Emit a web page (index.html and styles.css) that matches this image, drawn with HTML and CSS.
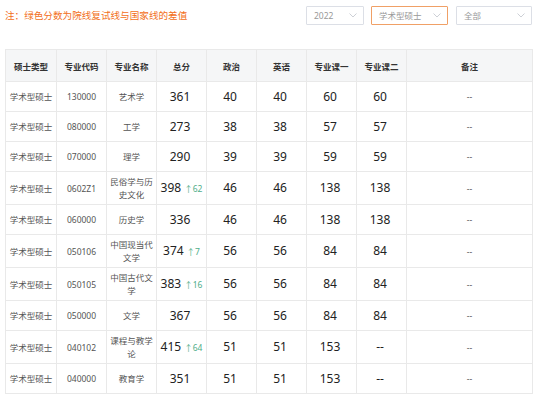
FILE: index.html
```html
<!DOCTYPE html>
<html lang="zh-CN">
<head>
    <meta charset="UTF-8">
    <meta name="viewport" content="width=device-width, initial-scale=1.0">
    <title>复试分数线</title>
    <link rel="stylesheet" href="styles.css">
</head>
<body>
    <div class="page">
        <!-- 顶部：说明 + 筛选 -->
        <div class="toolbar">
            <p class="note">注：绿色分数为院线复试线与国家线的差值</p>
            <div class="filters">
                <div class="select year">
                    <span>2022</span>
                    <svg class="arrow" width="8" height="5" viewBox="0 0 8 5"><path d="M0.5 0.5 L4 4 L7.5 0.5" fill="none" stroke="#c0c4cc" stroke-width="0.8"/></svg>
                </div>
                <div class="select type active">
                    <span>学术型硕士</span>
                    <svg class="arrow" width="8" height="5" viewBox="0 0 8 5"><path d="M0.5 0.5 L4 4 L7.5 0.5" fill="none" stroke="#c0c4cc" stroke-width="0.8"/></svg>
                </div>
                <div class="select all">
                    <span>全部</span>
                    <svg class="arrow" width="8" height="5" viewBox="0 0 8 5"><path d="M0.5 0.5 L4 4 L7.5 0.5" fill="none" stroke="#c0c4cc" stroke-width="0.8"/></svg>
                </div>
            </div>
        </div>

        <!-- 分数线列表 -->
        <table class="table">
            <colgroup>
                <col class="c-type">
                <col span="7" class="c-std">
                <col class="c-remark">
            </colgroup>
            <thead>
                <tr>
                    <th>硕士类型</th>
                    <th>专业代码</th>
                    <th>专业名称</th>
                    <th>总分</th>
                    <th>政治</th>
                    <th>英语</th>
                    <th>专业课一</th>
                    <th>专业课二</th>
                    <th>备注</th>
                </tr>
            </thead>
            <tbody id="scoreTable"></tbody>
        </table>
    </div>

    <script>
        const rows = [
            ['130000', '艺术学', 361, '', 40, 40, 60, 60],
            ['080000', '工学', 273, '', 38, 38, 57, 57],
            ['070000', '理学', 290, '', 39, 39, 59, 59],
            ['0602Z1', '民俗学与历史文化', 398, 62, 46, 46, 138, 138],
            ['060000', '历史学', 336, '', 46, 46, 138, 138],
            ['050106', '中国现当代文学', 374, 7, 56, 56, 84, 84],
            ['050105', '中国古代文学', 383, 16, 56, 56, 84, 84],
            ['050000', '文学', 367, '', 56, 56, 84, 84],
            ['040102', '课程与教学论', 415, 64, 51, 51, 153, '--'],
            ['040000', '教育学', 351, '', 51, 51, 153, '--']
        ];

        const scoreTable = document.getElementById('scoreTable');

        rows.forEach(r => {
            const [code, name, total, diff, politics, english, course1, course2] = r;
            const tr = document.createElement('tr');
            tr.innerHTML = `
                <td class="text">学术型硕士</td>
                <td class="text">${code}</td>
                <td class="text">${name}</td>
                <td><span class="num">${total}</span>${diff ? `<span class="diff">↑${diff}</span>` : ''}</td>
                <td><span class="num">${politics}</span></td>
                <td><span class="num">${english}</span></td>
                <td><span class="num">${course1}</span></td>
                <td><span class="num">${course2}</span></td>
                <td class="remark">--</td>
            `;
            scoreTable.appendChild(tr);
        });
    </script>
</body>
</html>
```

FILE: styles.css
```css
body {
    margin: 0;
    padding: 0;
    background: #fff;
    color: #333;
    font-family: "Noto Sans", "Noto Sans CJK SC", sans-serif;
}

.page {
    padding: 0 7px 0 5px;
}

.toolbar {
    display: flex;
    align-items: center;
    justify-content: space-between;
    height: 30px;
    margin-bottom: 19px;
}

.note {
    margin: 0;
    font-size: 9.6px;
    color: #f26f21;
}

.filters {
    display: flex;
    gap: 7px;
}

.select {
    display: flex;
    align-items: center;
    justify-content: space-between;
    box-sizing: border-box;
    height: 19px;
    padding: 0 6px 0 7px;
    border: 1px solid #dcdfe6;
    border-radius: 1px;
    font-size: 8.5px;
    color: #999;
}

.select.year {
    width: 58px;
}

.select.type {
    width: 77px;
    margin-right: 1px;
}

.select.all {
    width: 76px;
}

.select.active {
    border-color: #f0a066;
}

.table {
    width: 528px;
    border-collapse: collapse;
    table-layout: fixed;
}

.c-type {
    width: 51px;
}

.c-std {
    width: 50px;
}

.table th,
.table td {
    border: 1px solid #e9e9e9;
    padding: 3px 2px;
    text-align: center;
    vertical-align: middle;
}

.table th {
    height: 25px;
    background: #f5f6f7;
    font-size: 8.5px;
    font-weight: bold;
    color: #333;
}

.table td {
    height: 23px;
    font-size: 8.5px;
    line-height: 13px;
    color: #555;
}

.num {
    padding-right: 3px;
    font-size: 12px;
    color: #222;
}

.diff {
    font-size: 8.5px;
    color: #4fae8a;
}

.remark {
    color: #999;
}
```
